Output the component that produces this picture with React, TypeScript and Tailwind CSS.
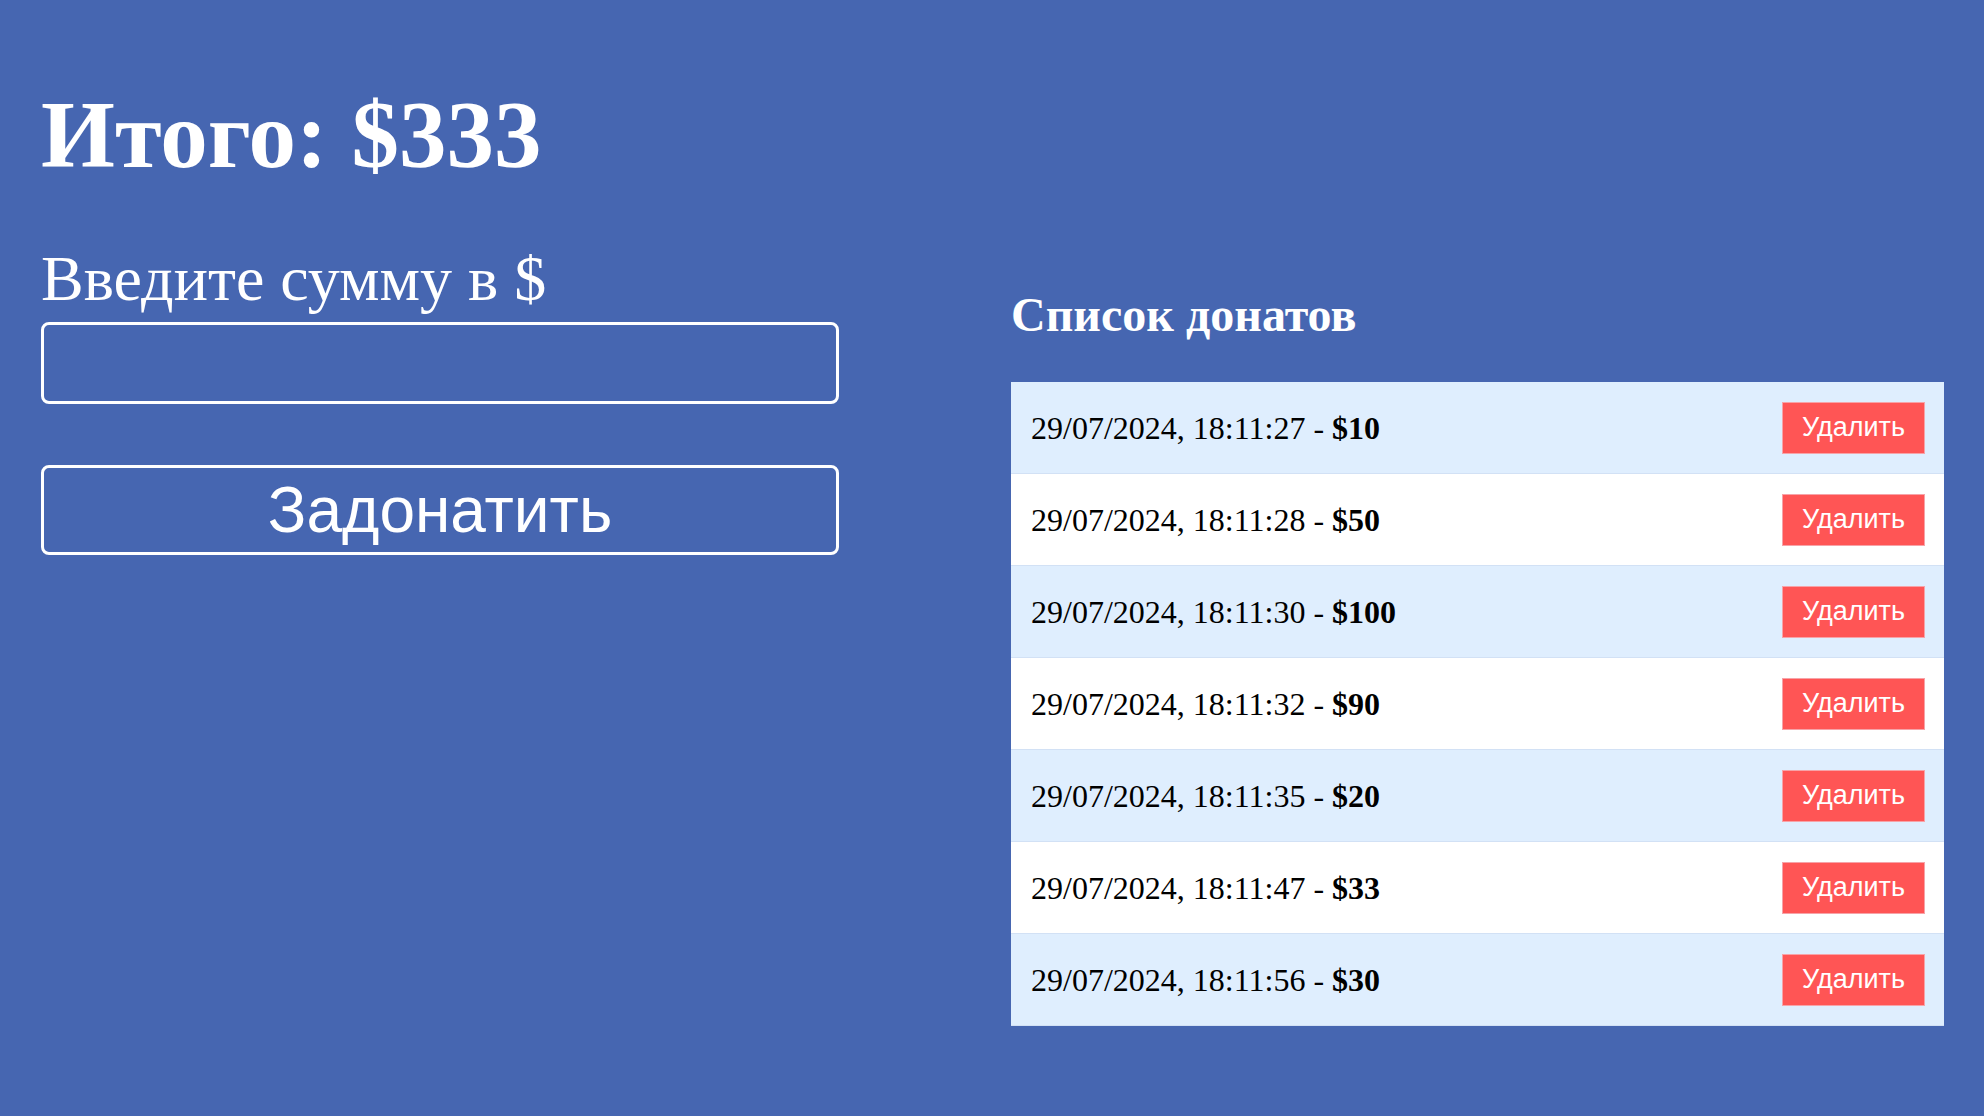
const DONATIONS = [
  { time: "29/07/2024, 18:11:27", amount: 10 },
  { time: "29/07/2024, 18:11:28", amount: 50 },
  { time: "29/07/2024, 18:11:30", amount: 100 },
  { time: "29/07/2024, 18:11:32", amount: 90 },
  { time: "29/07/2024, 18:11:35", amount: 20 },
  { time: "29/07/2024, 18:11:47", amount: 33 },
  { time: "29/07/2024, 18:11:56", amount: 30 },
]

export default function App() {
  const total = DONATIONS.reduce((sum, d) => sum + d.amount, 0)

  return (
    <div className="min-h-screen bg-[#4666b1] flex items-start pl-[41px] pr-[40px] gap-[172px] font-['Liberation_Serif',serif]">
      <div className="w-[798px] shrink-0 pt-[88px]">
        <h1 className="text-[95px] leading-none font-bold text-white">Итого: ${total}</h1>
        <label className="block mt-[64px] text-[64px] leading-none text-white">Введите сумму в $</label>
        <input
          type="text"
          className="block mt-[11px] w-full h-[82px] border-[3px] border-white rounded-[8px] bg-transparent outline-none px-4 text-white text-[40px]"
        />
        <button className="mt-[61px] w-full h-[90px] border-[3px] border-white rounded-[8px] flex items-center justify-center text-white text-[64px] leading-none font-['Liberation_Sans',sans-serif]">
          Задонатить
        </button>
      </div>

      <div className="flex-1 pt-[291px]">
        <h2 className="text-[48px] leading-none font-bold text-white">Список донатов</h2>
        <ul className="mt-[43px]">
          {DONATIONS.map((d, i) => (
            <li
              key={d.time}
              className={`h-[92px] flex items-center justify-between pl-5 pr-[19px] border-b border-[#d2e1f5] ${
                i % 2 === 0 ? "bg-[#dfeefe]" : "bg-white"
              }`}
            >
              <span className="text-[32px] leading-none text-black">
                {d.time} - <b>${d.amount}</b>
              </span>
              <button className="w-[143px] h-[52px] bg-[#ff5555] border border-[#f7a3a8] flex items-center justify-center text-white text-[27px] leading-none font-['Liberation_Sans',sans-serif]">
                Удалить
              </button>
            </li>
          ))}
        </ul>
      </div>
    </div>
  )
}
